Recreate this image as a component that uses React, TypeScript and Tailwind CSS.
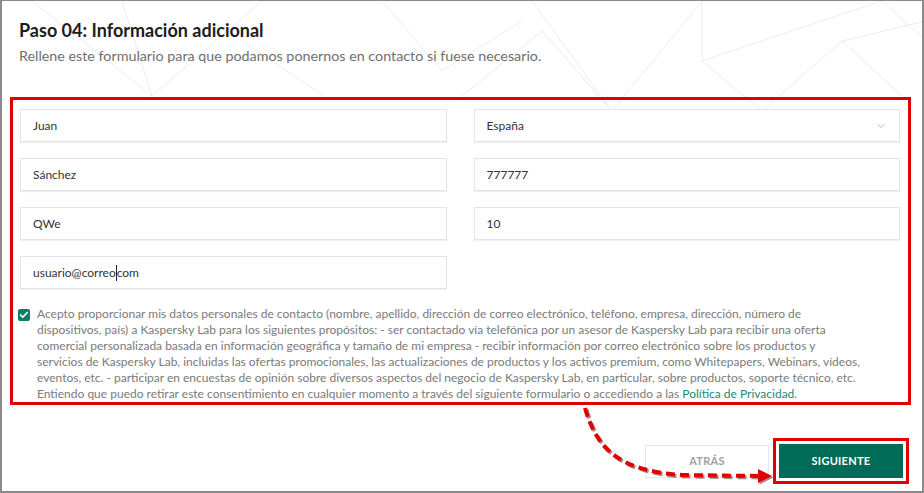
import { ChevronDown, Check } from "lucide-react";

const consentLines = [
  "Acepto proporcionar mis datos personales de contacto (nombre, apellido, dirección de correo electrónico, teléfono, empresa, dirección, número de",
  "dispositivos, país) a Kaspersky Lab para los siguientes propósitos: - ser contactado vía telefónica por un asesor de Kaspersky Lab para recibir una oferta",
  "comercial personalizada basada en información geográfica y tamaño de mi empresa - recibir información por correo electrónico sobre los productos y",
  "servicios de Kaspersky Lab, incluidas las ofertas promocionales, las actualizaciones de productos y los activos premium, como Whitepapers, Webinars, vídeos,",
  "eventos, etc. - participar en encuestas de opinión sobre diversos aspectos del negocio de Kaspersky Lab, en particular, sobre productos, soporte técnico, etc.",
];

function Field({ children, className = "" }: { children: React.ReactNode; className?: string }) {
  return (
    <div
      className={`h-[33px] bg-white border border-[#e4e4e4] shadow-[0_1px_1px_rgba(0,0,0,0.06)] flex items-center px-3 text-[12px] text-[#333] ${className}`}
    >
      {children}
    </div>
  );
}

function Backdrop() {
  return (
    <svg className="absolute inset-0 pointer-events-none" width="924" height="493" viewBox="0 0 924 493">
      <g stroke="#ececec" strokeWidth="1" fill="none">
        <path d="M30 0 L150 95 L260 0" />
        <path d="M150 95 L120 0" />
        <path d="M530 0 L610 110 L700 0" />
        <path d="M610 110 L540 30 L460 95" />
        <path d="M700 0 L700 60 L880 0" />
        <path d="M700 60 L760 110 L840 40 L900 95" />
        <path d="M840 40 L924 20" />
        <path d="M880 0 L924 40" />
        <path d="M380 0 L440 70 L520 20" />
        <path d="M240 40 L330 100" />
      </g>
    </svg>
  );
}

export default function App() {
  return (
    <div className="relative w-[924px] h-[493px] bg-white border-2 border-t border-[#8a8a8a] overflow-hidden font-['Lato',sans-serif]">
      <Backdrop />
      <div className="relative pl-[17px] pt-[17px]">
        <h1 className="text-[18px] font-bold text-[#1d1d1b] leading-[24px]">Paso 04: Información adicional</h1>
        <p className="mt-[5px] text-[14.3px] text-[#6f6f6f] leading-[18px]">
          Rellene este formulario para que podamos ponernos en contacto si fuese necesario.
        </p>
      </div>

      <div className="relative ml-[8px] mt-[32px] w-[901px] h-[308px] border-[3px] border-[#e00000] pl-[7px] pr-[8px] pt-[9px]">
        <div className="grid grid-cols-2 gap-x-[27px] gap-y-[16px]">
          <Field>Juan</Field>
          <Field className="justify-between">
            <span>España</span>
            <ChevronDown className="w-3 h-3 text-[#9a9a9a]" strokeWidth={1.5} />
          </Field>
          <Field>Sánchez</Field>
          <Field>777777</Field>
          <Field>QWe</Field>
          <Field>10</Field>
          <Field>
            <span>usuario@correo</span>
            <span className="inline-block w-px h-[16px] bg-[#222]" />
            <span>com</span>
          </Field>
        </div>

        <div className="flex gap-[7px] mt-[17px]">
          <div className="mt-[3px] -ml-[2px] w-[12px] h-[12px] shrink-0 rounded-[2px] bg-[#0c7d68] flex items-center justify-center">
            <Check className="w-[10px] h-[10px] text-white" strokeWidth={4} />
          </div>
          <div className="text-[12px] leading-[16px] text-[#7a7a7a] whitespace-nowrap">
            {consentLines.map((l) => (
              <div key={l}>{l}</div>
            ))}
            <div>
              Entiendo que puedo retirar este consentimiento en cualquier momento a través del siguiente formulario o accediendo a las{" "}
              <span className="text-[#1a8a78]">Política de Privacidad</span>.
            </div>
          </div>
        </div>
      </div>

      <div className="relative flex justify-end items-center gap-[10px] pr-[19px] mt-[39px]">
        <button className="w-[124px] h-[33px] border border-[#e6e6e6] bg-white text-[11px] font-bold text-[#a0a0a0] tracking-wide">
          ATRÁS
        </button>
        <div className="border-[3px] border-[#e00000] p-[3px] -m-[6px]">
          <button className="w-[124px] h-[34px] bg-[#006b56] text-[11px] font-bold text-white tracking-wide">
            SIGUIENTE
          </button>
        </div>
      </div>

      <svg className="absolute left-0 top-0 pointer-events-none" width="924" height="493" viewBox="0 0 924 493">
        <g transform="translate(1.5,1.5)" opacity="0.45">
          <path d="M583 407 C 595 450, 620 470, 680 474 L 758 475" stroke="#400000" strokeWidth="4" strokeDasharray="9 5" fill="none" />
          <path d="M756 468 L770 475 L756 482 Z" fill="#400000" />
        </g>
        <path d="M583 407 C 595 450, 620 470, 680 474 L 758 475" stroke="#e00000" strokeWidth="4" strokeDasharray="9 5" fill="none" />
        <path d="M756 468 L770 475 L756 482 Z" fill="#e00000" />
      </svg>
    </div>
  );
}
